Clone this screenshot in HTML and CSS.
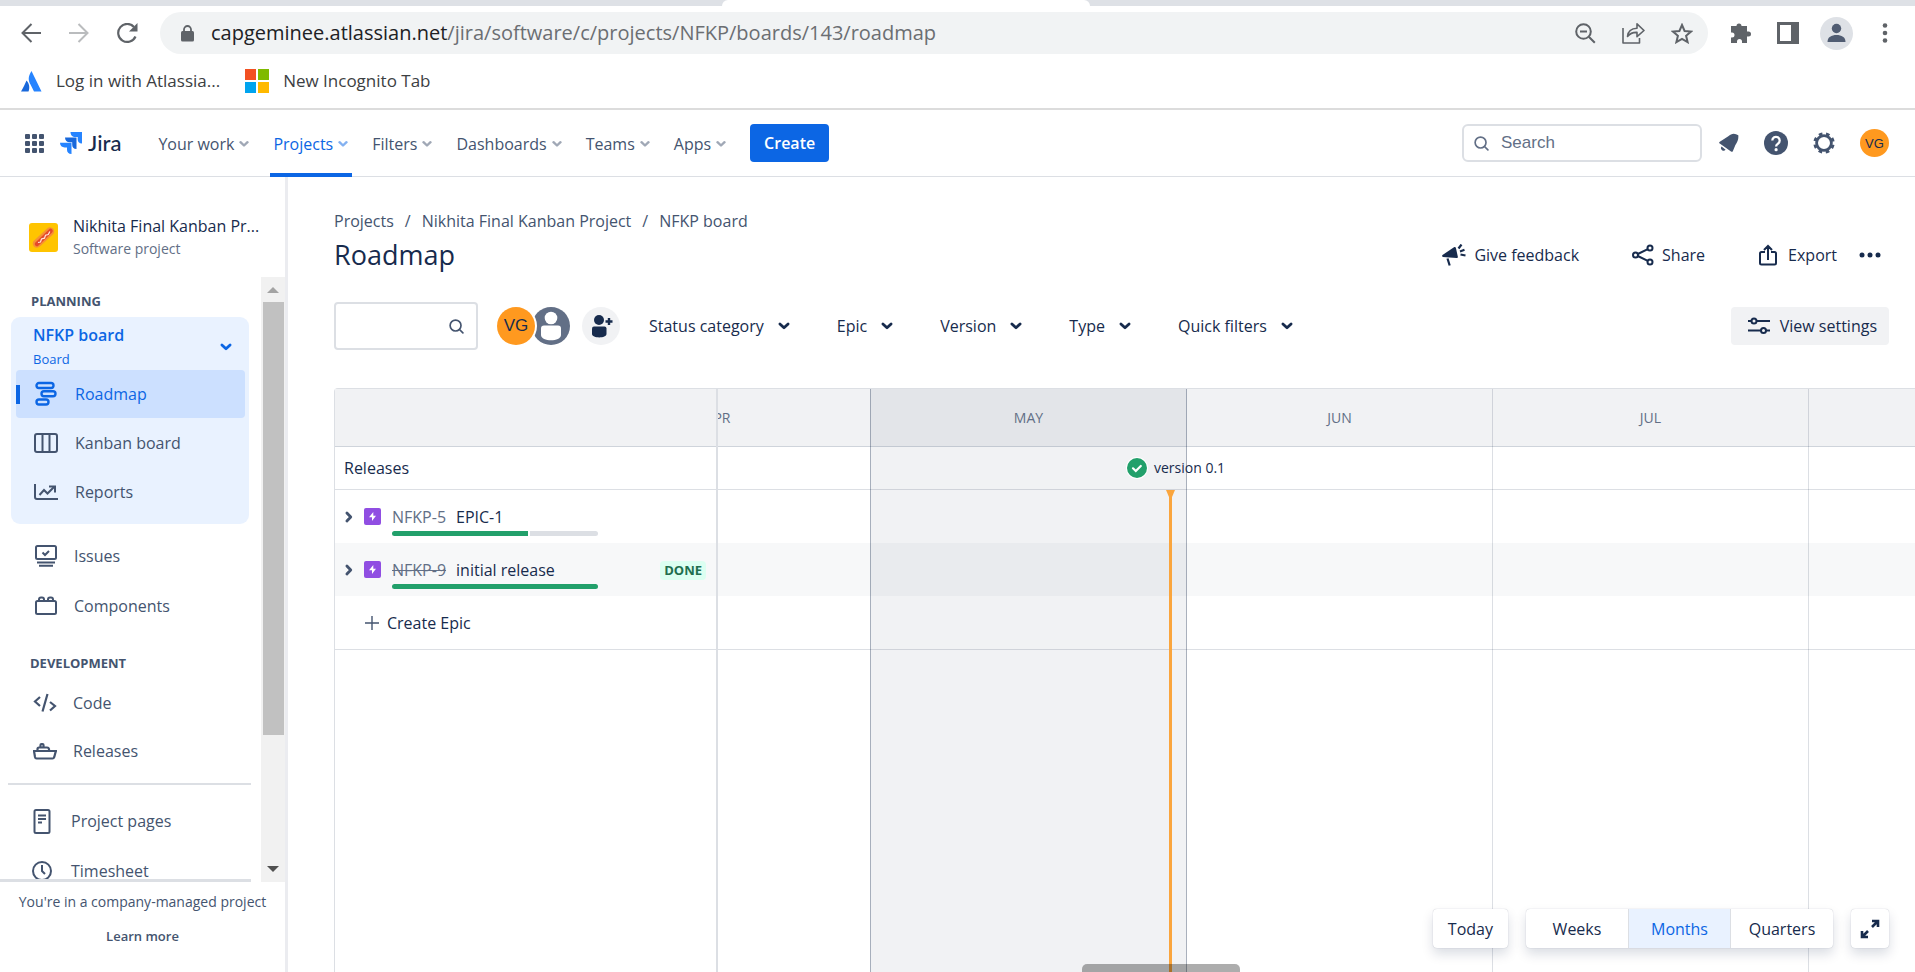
FILE: index.html
```html
<!DOCTYPE html>
<html lang="en">
<head>
<meta charset="utf-8">
<title>Roadmap - NFKP board - Jira</title>
<link rel="stylesheet" href="styles.css">
</head>
<body>
<svg class="defs" aria-hidden="true">
  <symbol id="chevron" viewBox="0 0 12 12"><path d="M2.500 4.200L6 7.500l3.500-3.300" fill="none" stroke="currentColor" stroke-width="2.400" stroke-linecap="round" stroke-linejoin="round"/></symbol>
  <symbol id="search" viewBox="0 0 16 16"><circle cx="7" cy="7" r="5.800" fill="none" stroke="currentColor" stroke-width="1.800"/><path d="M11.200 11.200l3.600 3.600" fill="none" stroke="currentColor" stroke-width="1.800" stroke-linecap="round"/></symbol>
  <symbol id="epic" viewBox="0 0 17 17"><rect width="17" height="17" rx="2" fill="#904ee2"/><path d="M9.300 4L5 9.300h3V13l4-5.300H9.300z" fill="#fff"/></symbol>
</svg>

<div class="tabstrip"><div class="tab"></div></div>
<div class="toolbar">
  <button class="tool" aria-label="Back"><svg width="20" height="20" viewBox="0 0 20 20"><path d="M20 10H2M10.500 1L1.500 10l9 9" fill="none" stroke="#5f6368" stroke-width="2"/></svg></button>
  <button class="tool" aria-label="Forward"><svg width="20" height="20" viewBox="0 0 20 20"><path d="M0 10h18M9.500 1l9 9-9 9" fill="none" stroke="#babcbe" stroke-width="2"/></svg></button>
  <button class="tool reload" aria-label="Reload"><svg width="21" height="21" viewBox="0 0 21 21"><path d="M18.500 13.500A9 9 0 1 1 17 4" fill="none" stroke="#5f6368" stroke-width="2.200"/><path d="M20.500 0v8.500H12z" fill="#5f6368"/></svg></button>
  <div class="omnibox">
    <svg width="13" height="17" viewBox="0 0 13 17"><rect y="6" width="13" height="10.500" rx="1.500" fill="#5f6368"/><path d="M3 7V4.500a3.500 3.500 0 0 1 7 0V7" fill="none" stroke="#5f6368" stroke-width="1.800"/></svg>
    <span class="url">capgeminee.atlassian.net<span class="path">/jira/software/c/projects/NFKP/boards/143/roadmap</span></span>
    <button aria-label="Zoom"><svg width="21" height="21" viewBox="0 0 21 21"><circle cx="8.500" cy="8.500" r="7.300" fill="none" stroke="#5f6368" stroke-width="2"/><path d="M5 8.500h7M13.800 13.800l6 6" stroke="#5f6368" stroke-width="2"/></svg></button>
    <button aria-label="Share page"><svg width="23" height="22" viewBox="0 0 23 22"><path d="M1 6v15h16.500v-5M5.500 14.500C6 9 9.500 6.500 15 6.300V1.800l7 6.700-7 6.200v-4.300c-4-.2-7 1-9.500 4.100z" fill="none" stroke="#5f6368" stroke-width="1.600" stroke-linejoin="round"/></svg></button>
    <button aria-label="Bookmark"><svg width="22" height="21" viewBox="0 0 22 21"><path d="M11 2l2.600 6 6.400.6-4.900 4.200 1.500 6.300L11 15.800l-5.600 3.300 1.500-6.300L2 8.600 8.400 8z" fill="none" stroke="#5f6368" stroke-width="2"/></svg></button>
  </div>
  <div class="extras">
    <button aria-label="Extensions"><svg width="22" height="22" viewBox="0 0 22 22"><path d="M1 4h5.500a2.500 2.500 0 1 1 5 0H17v5.500h1.500a2.500 2.500 0 1 1 0 5H17V21h-5v-1.500a2.500 2.500 0 0 0-5 0V21H1v-5.500h1a2.500 2.500 0 0 0 0-5H1z" fill="#5f6368"/></svg></button>
    <button aria-label="Side panel"><svg width="22" height="22" viewBox="0 0 22 22"><path d="M0 0h22v22H0zM3 3v16h11V3z" fill="#5f6368" fill-rule="evenodd"/></svg></button>
    <button aria-label="Profile"><svg width="33" height="33" viewBox="0 0 33 33"><circle cx="16.500" cy="16.500" r="16.500" fill="#dee1e6"/><circle cx="16.500" cy="11.500" r="4.700" fill="#505c72"/><path d="M7.500 25c0-5 4-7 9-7s9 2 9 7z" fill="#505c72"/></svg></button>
    <button aria-label="Menu"><svg width="6" height="20" viewBox="0 0 6 20"><g fill="#5f6368"><circle cx="3" cy="2.500" r="2.300"/><circle cx="3" cy="10" r="2.300"/><circle cx="3" cy="17.500" r="2.300"/></g></svg></button>
  </div>
</div>
<div class="bookmarks">
  <a href="#"><svg width="21" height="21" viewBox="0 0 21 21"><path d="M5.500 9.500C4.500 12 2 17 0 20.500h7.500C9 17 8.500 12.500 5.500 9.500z" fill="#1868db"/><path d="M10.500 0C6.500 6 7.500 10 9.500 13.500l3.500 7h7.500z" fill="#2684ff"/></svg>Log in with Atlassia...</a>
  <a href="#"><svg width="24" height="24" viewBox="0 0 24 24"><path d="M0 0h11v11H0z" fill="#f25022"/><path d="M13 0h11v11H13z" fill="#7fba00"/><path d="M0 13h11v11H0z" fill="#00a4ef"/><path d="M13 13h11v11H13z" fill="#ffb900"/></svg>New Incognito Tab</a>
</div>

<header class="header">
  <button class="switcher" aria-label="Switch to"><svg width="19" height="19" viewBox="0 0 19 19"><g fill="#44546f"><rect width="5" height="5" rx="1"/><rect x="7" width="5" height="5" rx="1"/><rect x="14" width="5" height="5" rx="1"/><rect y="7" width="5" height="5" rx="1"/><rect x="7" y="7" width="5" height="5" rx="1"/><rect x="14" y="7" width="5" height="5" rx="1"/><rect y="14" width="5" height="5" rx="1"/><rect x="7" y="14" width="5" height="5" rx="1"/><rect x="14" y="14" width="5" height="5" rx="1"/></g></svg></button>
  <a class="logo" href="#"><svg width="22" height="22" viewBox="0 0 22 22"><path d="M10.500 0H22v11.500c-3 0-4.300-2-4.300-4.300V5h-2.500c-2.700 0-4.700-2-4.700-5z" fill="#2684ff"/><path d="M5 5.500h11.500V17c-3 0-4.300-2-4.300-4.300v-2.400H9.700C7 10.300 5 8.500 5 5.500z" fill="#1868db"/><path d="M0 10.700h11.500V22c-3 0-4.500-2-4.500-4.300v-2.300H4.700C2 15.400 0 13.500 0 10.700z" fill="#2684ff"/></svg>Jira</a>
  <nav class="nav">
    <button>Your work<svg><use href="#chevron"/></svg></button>
    <button class="active">Projects<svg><use href="#chevron"/></svg></button>
    <button>Filters<svg><use href="#chevron"/></svg></button>
    <button>Dashboards<svg><use href="#chevron"/></svg></button>
    <button>Teams<svg><use href="#chevron"/></svg></button>
    <button>Apps<svg><use href="#chevron"/></svg></button>
  </nav>
  <button class="create">Create</button>
  <label class="search"><svg width="15" height="15"><use href="#search"/></svg><input type="text" placeholder="Search" aria-label="Search"></label>
  <div class="actions">
    <button aria-label="Notifications"><svg width="20" height="20" viewBox="0 0 20 20"><path d="M19.300 2.200c-3.500-2.400-7-1.900-10 1L.8 8.800c-.9.600-.9 1.200 0 1.700L12 18.400c.9.600 1.500.4 1.900-.5l2.500-6C18.500 9 19.700 6 19.300 2.200z" fill="#44546f"/><path d="M2.600 13.600l4 3.100a2.400 2.400 0 1 1-4-3.100z" fill="#44546f"/></svg></button>
    <button aria-label="Help"><svg width="24" height="24" viewBox="0 0 24 24"><circle cx="12" cy="12" r="12" fill="#44546f"/><path d="M8.300 9.500a3.700 3.700 0 1 1 5.600 3.200c-1.200.7-1.800 1.200-1.800 2.800" fill="none" stroke="#fff" stroke-width="2.300"/><circle cx="12.100" cy="18.700" r="1.600" fill="#fff"/></svg></button>
    <button aria-label="Settings"><svg width="22" height="22" viewBox="0 0 22 22"><circle cx="11" cy="11" r="7.400" fill="none" stroke="#44546f" stroke-width="2.800"/><circle cx="11" cy="11" r="9.300" fill="none" stroke="#44546f" stroke-width="2.800" stroke-dasharray="3.650 3.650" stroke-dashoffset="-1.800"/></svg></button>
    <button class="me" aria-label="Your profile">VG</button>
  </div>
</header>

<div class="app">
  <aside class="sidebar">
    <div class="project">
      <svg width="29" height="29" viewBox="0 0 29 29"><rect width="29" height="29" rx="3" fill="#ffc400"/><path d="M8 20.500L21 8.500" stroke="#f79232" stroke-width="8.500" stroke-linecap="round"/><path d="M8 21L21.500 8" stroke="#e5492b" stroke-width="4.500" stroke-linecap="round"/><path d="M9 19.500l2.500-.5 1-3 3-.8 1-3 2.800-.7 1.500-3" fill="none" stroke="#ffe9dc" stroke-width="1.200"/></svg>
      <div><strong>Nikhita Final Kanban Pr...</strong><small>Software project</small></div>
    </div>
    <div class="scroll">
      <nav class="menu">
        <h2>PLANNING</h2>
        <div class="group">
          <button class="board"><span><b>NFKP board</b><small>Board</small></span><svg><use href="#chevron"/></svg></button>
          <a class="item current" href="#"><svg width="24" height="26" viewBox="0 0 24 26" fill="none" stroke="#0c66e4" stroke-width="2.400"><rect x="2.500" y="2" width="17" height="5" rx="2.500"/><rect x="7.500" y="10.200" width="14" height="5" rx="2.500"/><rect x="2.500" y="18.500" width="12" height="5" rx="2.500"/></svg>Roadmap</a>
          <a class="item" href="#"><svg width="24" height="20" viewBox="0 0 24 20" fill="none" stroke="#44546f" stroke-width="2"><rect x="1" y="1" width="22" height="18" rx="2"/><path d="M8.500 1v18M15.500 1v18"/></svg>Kanban board</a>
          <a class="item" href="#"><svg width="24" height="18" viewBox="0 0 24 18" fill="none" stroke="#44546f" stroke-width="2"><path d="M1 1v13a2 2 0 0 0 2 2h21M5.500 12l4.500-5 3.500 3.500L20 4"/><path d="M15 3.500h6v6" stroke-width="2"/></svg>Reports</a>
        </div>
        <a class="item plain" href="#"><svg width="24" height="22" viewBox="0 0 24 22" fill="none" stroke="#44546f" stroke-width="2"><rect x="2" y="1" width="20" height="13" rx="1.500"/><path d="M3 17.500h18M5 20.800h14M8.500 7.500l2.500 2.500 4-4"/></svg>Issues</a>
        <a class="item plain" href="#"><svg width="24" height="20" viewBox="0 0 24 20" fill="none" stroke="#44546f" stroke-width="2"><rect x="2" y="5" width="20" height="13" rx="1.500"/><path d="M5 5V3.500a2 2 0 0 1 2-2h1a2 2 0 0 1 2 2V5M14 5V3.500a2 2 0 0 1 2-2h1a2 2 0 0 1 2 2V5"/></svg>Components</a>
        <h2 class="dev">DEVELOPMENT</h2>
        <a class="item dev" href="#"><svg width="24" height="20" viewBox="0 0 24 20" fill="none" stroke="#44546f" stroke-width="2.200"><path d="M7 4L2 8.500 7 13M14.500 1l-5 17.500M17 9l5 4-5 4.500"/></svg>Code</a>
        <a class="item dev" href="#"><svg width="24" height="18" viewBox="0 0 24 18" fill="none" stroke="#44546f" stroke-width="2.200"><path d="M1 9h22c-1 2.500-1 4-2 6.500-.2.800-.6 1-1.500 1H3.500c-1 0-1.300-.5-1.500-1.500zM4.500 9V7a1.500 1.500 0 0 1 1.500-1.500h8A2 2 0 0 1 16 7v2M7.500 5.500V3a1 1 0 0 1 1-1h1a1 1 0 0 1 1 1v2.500"/></svg>Releases</a>
        <hr>
        <a class="item pages" href="#"><svg width="20" height="25" viewBox="0 0 20 25" fill="none" stroke="#44546f" stroke-width="2"><rect x="2.500" y="1" width="15" height="23" rx="1.500"/><path d="M6 6.500h8M6 10h8M6 13.500h4"/></svg>Project pages</a>
        <a class="item pages" href="#"><svg width="20" height="20" viewBox="0 0 20 20" fill="none" stroke="#44546f" stroke-width="2"><circle cx="10" cy="10" r="9"/><path d="M10 4v6l3 3"/></svg>Timesheet</a>
      </nav>
      <div class="scrollbar"><svg width="12" height="6"><path d="M6 0l6 6H0z" fill="#a3a3a3"/></svg><div class="thumb"></div><svg width="12" height="6"><path d="M0 0h12L6 6z" fill="#505050"/></svg></div>
    </div>
    <footer class="note"><p>You're in a company-managed project</p><a href="#">Learn more</a></footer>
  </aside>

  <main class="main">
    <nav class="crumbs"><a href="#">Projects</a><span>/</span><a href="#">Nikhita Final Kanban Project</a><span>/</span><a href="#">NFKP board</a></nav>
    <div class="titlebar">
      <h1>Roadmap</h1>
      <button class="feedback"><svg width="24" height="22" viewBox="0 0 24 22"><path d="M.5 11L12 3.200c1-.5 1.600-.2 1.900.8l1.900 8.500c.2 1-.2 1.500-1.200 1.500L1 13c-1-.4-1.200-1.200-.5-2z" fill="#172b4d"/><path d="M5.500 14.500l2.200 7M16.500 4.500l3-4M18 7.500l4.500-1.700M18.500 10.500l5 1" stroke="#172b4d" stroke-width="2.200" fill="none"/></svg>Give feedback</button>
      <button class="share"><svg width="22" height="22" viewBox="0 0 22 22" fill="none" stroke="#172b4d" stroke-width="2"><circle cx="3.500" cy="11" r="2.500"/><circle cx="18" cy="4" r="2.500"/><circle cx="18" cy="18" r="2.500"/><path d="M5.800 10l10-4.800M5.800 12l10 4.800"/></svg>Share</button>
      <button class="export"><svg width="18" height="22" viewBox="0 0 18 22" fill="none" stroke="#172b4d" stroke-width="2"><path d="M6 8H2.500C1.500 8 1 8.500 1 9.500V19c0 1 .5 1.500 1.500 1.500h13c1 0 1.500-.5 1.500-1.500V9.500C17 8.500 16.500 8 15.500 8H12M9 16V2M5 6l4-4 4 4"/></svg>Export</button>
      <button class="more" aria-label="More"><svg width="22" height="6" viewBox="0 0 22 6" fill="#172b4d"><circle cx="3" cy="3" r="2.500"/><circle cx="11" cy="3" r="2.500"/><circle cx="19" cy="3" r="2.500"/></svg></button>
    </div>
    <div class="filters">
      <label class="find"><input type="text" aria-label="Search roadmap"><svg width="15" height="15"><use href="#search"/></svg></label>
      <div class="people">
        <button class="vg">VG</button>
        <button class="nobody" aria-label="Unassigned"><svg width="38" height="38" viewBox="0 0 38 38"><circle cx="19" cy="19" r="19" fill="#626f86"/><circle cx="19" cy="11" r="6.300" fill="#fff"/><path d="M9 21.500a3 3 0 0 1 3-3h14a3 3 0 0 1 3 3V28c0 7-20 7-20 0z" fill="#fff"/></svg></button>
        <button class="add" aria-label="Add people"><svg width="38" height="38" viewBox="0 0 38 38"><circle cx="19" cy="19" r="19" fill="#f1f2f4"/><circle cx="17" cy="13" r="5" fill="#172b4d"/><path d="M10 21.500a2 2 0 0 1 2-2h10.500a2 2 0 0 1 2 2V27c0 4.500-14.500 4.500-14.500 0z" fill="#172b4d"/><path d="M27 11v7M23.500 14.500h7" stroke="#172b4d" stroke-width="2.400"/></svg></button>
      </div>
      <button class="filter status">Status category<svg><use href="#chevron"/></svg></button>
      <button class="filter">Epic<svg><use href="#chevron"/></svg></button>
      <button class="filter">Version<svg><use href="#chevron"/></svg></button>
      <button class="filter">Type<svg><use href="#chevron"/></svg></button>
      <button class="filter">Quick filters<svg><use href="#chevron"/></svg></button>
      <button class="settings"><svg width="22" height="18" viewBox="0 0 22 18" fill="none" stroke="#172b4d" stroke-width="2"><path d="M0 4h3.500M8.500 4H22M0 13.500h13M18 13.500h4"/><circle cx="6" cy="4" r="2.500"/><circle cx="15.500" cy="13.500" r="2.500"/></svg>View settings</button>
    </div>

    <section class="chart">
      <div class="epics">
        <div class="head"></div>
        <div class="releases">Releases</div>
        <div class="epic">
          <button class="expand" aria-label="Expand"><svg><use href="#chevron"/></svg></button>
          <svg width="17" height="17"><use href="#epic"/></svg>
          <div class="summary"><div><a class="key" href="#">NFKP-5</a><span>EPIC-1</span></div><div class="progress"><i class="done" style="width:66%"></i><i class="todo"></i></div></div>
        </div>
        <div class="epic alt">
          <button class="expand" aria-label="Expand"><svg><use href="#chevron"/></svg></button>
          <svg width="17" height="17"><use href="#epic"/></svg>
          <div class="summary"><div><a class="key closed" href="#">NFKP-9</a><span>initial release</span></div><div class="progress"><i class="done" style="width:100%"></i></div></div>
          <span class="badge">DONE</span>
        </div>
        <button class="create-epic"><svg width="14" height="14" viewBox="0 0 14 14"><path d="M7 0v14M0 7h14" stroke="#44546f" stroke-width="1.400"/></svg>Create Epic</button>
      </div>
      <div class="timeline">
        <div class="rows"><div class="head"></div><div class="releases"></div><div class="epic"></div><div class="epic alt"></div><div class="create-epic"></div></div>
        <div class="months">
          <div class="month m30">APR</div><div class="month m31 now">MAY</div><div class="month m30">JUN</div><div class="month m31">JUL</div><div class="month m31"></div>
        </div>
        <div class="today"><svg width="9" height="7"><path d="M0 0h9L6 7H3z" fill="#faa53d"/></svg></div>
        <div class="version"><svg width="22" height="22" viewBox="0 0 22 22"><circle cx="11" cy="11" r="11" fill="#fff"/><circle cx="11" cy="11" r="10" fill="#22a06b"/><path d="M7 11.300l2.800 2.700 5-5" fill="none" stroke="#fff" stroke-width="2.200" stroke-linecap="round"/></svg>version 0.1</div>
        <div class="hthumb"></div>
        <div class="scale">
          <button class="card">Today</button>
          <div class="card modes"><button>Weeks</button><button class="on">Months</button><button>Quarters</button></div>
          <button class="card full" aria-label="Full screen"><svg width="20" height="20" viewBox="0 0 20 20"><path d="M12 2h6v6M18 2l-6 6M2 12v6h6M2 18l6-6" fill="none" stroke="#172b4d" stroke-width="2.600"/></svg></button>
        </div>
      </div>
    </section>
  </main>
</div>
</body>
</html>
```
FILE: styles.css
```css
* { box-sizing: border-box; }
body {
  margin: 0;
  height: 100vh;
  display: flex;
  flex-direction: column;
  overflow: hidden;
  background: #fff;
  color: #172b4d;
  font: 16px/24px "Open Sans", "Noto Sans", sans-serif;
}
button {
  font: inherit;
  color: inherit;
  background: none;
  border: 0;
  padding: 0;
  display: flex;
  align-items: center;
  white-space: nowrap;
  flex: none;
}
a { color: inherit; text-decoration: none; }
svg { display: block; flex: none; }
.defs { position: absolute; width: 0; height: 0; }

/* Browser chrome */
.tabstrip { height: 6px; background: #dee1e6; flex: none; }
.tab { width: 368px; height: 6px; margin-left: 722px; background: #fff; border-radius: 6px 6px 0 0; }
.toolbar { display: flex; align-items: center; height: 54px; flex: none; padding: 0 16px 0 21px; }
.tool { margin-right: 28px; }
.reload { margin-right: 22px; }
.omnibox { flex: 1; height: 42px; display: flex; align-items: center; gap: 26px; padding: 0 15px 0 21px; background: #f1f3f4; border-radius: 21px; }
.url { flex: 1; margin-left: -9px; font-size: 20px; color: #202124; white-space: nowrap; }
.path { color: #6b6e72; }
.extras { display: flex; align-items: center; gap: 25px; margin-left: 22px; padding-right: 11px; }
.extras button:nth-child(3) { margin: 0 4px 0 -4px; }
.bookmarks { display: flex; align-items: center; gap: 25px; height: 50px; padding: 0 21px 6px; border-bottom: 2px solid #dcdcdc; flex: none; color: #3c4043; font-size: 17px; }
.bookmarks a { display: flex; align-items: center; gap: 14px; }

/* Jira header */
.header { display: flex; align-items: center; height: 67px; flex: none; padding: 0 26px 0 25px; border-bottom: 1px solid #dcdfe4; }
.logo { display: flex; align-items: center; gap: 6px; margin: 0 34px 0 16px; font: 500 22px/24px Lato, sans-serif; }
.nav { display: flex; gap: 17px; align-self: stretch; margin-bottom: -1px; }
.nav button { gap: 4px; padding: 5px 3px 0; border-bottom: 4px solid transparent; color: #44546f; font-weight: 500; }
.nav svg { width: 12px; height: 12px; opacity: .5; }
.nav .active { color: #0c66e4; border-color: #0c66e4; }
.create { height: 38px; padding: 0 14px; margin-left: 20px; border-radius: 4px; background: #0c66e4; color: #fff; font-weight: 600; }
.search { display: flex; align-items: center; gap: 12px; width: 240px; height: 38px; margin-left: auto; padding: 0 10px; border: 2px solid #dcdfe4; border-radius: 6px; color: #626f86; }
.search input, .find input { flex: 1; min-width: 0; border: 0; outline: 0; padding: 0; background: none; font: 17px "Liberation Sans", sans-serif; }
.search input::placeholder { color: #626f86; }
.actions { display: flex; align-items: center; gap: 25px; margin-left: 17px; }
.me { width: 29px; height: 28px; justify-content: center; border-radius: 50%; background: #ff991f; color: #172b4d; font: 13px "Liberation Sans", sans-serif; }

.app { flex: 1; display: flex; min-height: 0; }

/* Sidebar */
.sidebar { width: 288px; flex: none; display: flex; flex-direction: column; border-right: 3px solid #ebecf0; }
.project { display: flex; align-items: center; gap: 15px; height: 100px; padding: 20px 16px 0 29px; flex: none; }
.project strong, .project small { display: block; white-space: nowrap; }
.project strong { font-weight: 500; }
small { font-size: 13px; }
.project small { font-size: 14px; line-height: 22px; color: #626f86; }
.scroll { flex: 1; min-height: 0; display: flex; justify-content: space-between; }
.menu { width: 251px; padding: 12px 0 0 8px; overflow: hidden; border-bottom: 3px solid #dcdfe4; }
.menu h2 { margin: 0 0 4px 23px; font-size: 13px; line-height: 24px; font-weight: 700; color: #44546f; }
.menu h2.dev { margin: 20px 0 4px 22px; }
.group { width: 238px; height: 207px; margin: 0 0 7px 3px; padding: 0 4px 0 5px; border-radius: 9px; background: #e9f2ff; }
.board { width: 100%; height: 53px; justify-content: space-between; text-align: left; color: #0c66e4; padding: 6px 12px 0 17px; }
.board b, .board small { display: block; }
.board b { font-weight: 600; }
.board svg { width: 14px; height: 14px; }
.item { display: flex; align-items: center; gap: 17px; height: 49px; padding-left: 18px; color: #44546f; border-radius: 4px; white-space: nowrap; }
.item.current { height: 48px; color: #0c66e4; background: #cce0ff linear-gradient(#0c66e4, #0c66e4) left center / 4px 19px no-repeat; }
.item.plain { height: 50px; padding-left: 26px; gap: 16px; }
.item.dev { height: 48px; padding-left: 25px; gap: 16px; }
.item.pages { height: 50px; padding-left: 24px; gap: 19px; }
.menu hr { height: 2px; margin: 8px 0 11px; border: 0; background: #dcdfe4; }
.scrollbar { width: 24px; display: flex; flex-direction: column; align-items: center; padding: 10px 0; background: #f1f1f1; }
.thumb { width: 21px; flex: none; height: 433px; margin: 9px 0 auto; background: #c1c1c1; }
.note { height: 90px; flex: none; text-align: center; color: #44546f; font-size: 13px; }
.note p { margin: 8px 0 10px; font-size: 14px; }
.note a { font-weight: 600; }

/* Main */
.main { flex: 1; min-width: 0; display: flex; flex-direction: column; padding: 32px 0 0 46px; }
.crumbs { display: flex; gap: 11px; color: #44546f; }
.titlebar { display: flex; align-items: center; height: 44px; padding-right: 34px; font-weight: 500; }
h1 { margin: 0 auto 0 0; font-size: 27px; line-height: 36px; font-weight: 500; }
.titlebar button { gap: 8px; }
.titlebar .share { margin-left: 53px; }
.titlebar .export { margin-left: 54px; gap: 11px; }
.titlebar .more { margin-left: 22px; }
.filters { display: flex; align-items: center; height: 48px; margin-top: 25px; padding-right: 26px; font-weight: 500; }
.find { display: flex; align-items: center; width: 144px; height: 48px; padding: 0 12px; border: 2px solid #dcdfe4; border-radius: 4px; color: #44546f; }
.people { display: flex; margin-left: 19px; }
.vg { width: 38px; height: 38px; justify-content: center; border-radius: 50%; background: #ff991f; box-shadow: 0 0 0 2px #fff; font: 17px "Liberation Sans", sans-serif; z-index: 1; }
.nobody { margin-left: -3px; }
.add { margin-left: 12px; }
.filter { gap: 13px; margin-right: 46px; }
.filter svg { width: 14px; height: 14px; }
.status { margin-left: 29px; }
.settings { height: 38px; margin-left: auto; padding: 0 12px 0 17px; gap: 10px; border-radius: 4px; background: #f1f2f4; }

/* Roadmap chart */
.chart { flex: 1; min-height: 0; display: flex; margin-top: 38px; border: 1px solid #dcdfe4; border-width: 1px 0 0 1px; border-radius: 4px 0 0 0; }
.epics { width: 383px; flex: none; border-right: 2px solid #dcdfe4; }
.head { height: 58px; border-bottom: 1px solid #cfd4db; background: #f1f2f4; }
.releases { height: 43px; padding: 9px; border-bottom: 1px solid #dcdfe4; font-weight: 500; }
.epic { display: flex; align-items: flex-start; height: 53px; padding: 18px 9px 0; }
.epic.alt { background: #f7f8f9; }
.expand { width: 20px; height: 17px; color: #44546f; }
.expand svg { width: 14px; height: 14px; transform: rotate(-90deg); margin-left: -2px; }
.summary { margin: -3px auto 0 11px; width: 206px; }
.key { color: #626f86; margin-right: 10px; }
.closed { text-decoration: line-through; }
.progress { display: flex; gap: 2px; height: 5px; margin-top: 2px; border-radius: 3px; overflow: hidden; }
.done { background: #22a06b; }
.todo { flex: 1; background: #dcdfe4; }
.badge { padding: 0 4px; margin-right: 1px; border-radius: 4px; background: #dcfff1; color: #216e4e; font-size: 13px; line-height: 19px; font-weight: 700; }
.create-epic { width: 100%; height: 54px; padding-left: 30px; gap: 8px; border-bottom: 1px solid #dcdfe4; font-weight: 500; }
.timeline { flex: 1; min-width: 0; position: relative; overflow: hidden; }
.months { position: absolute; inset: 0; display: flex; margin-left: -153px; }
.month { flex: none; height: 100%; padding-top: 17px; border-right: 1px solid rgba(9, 30, 66, .14); text-align: center; font-size: 14px; color: #626f86; }
.m30 { width: 306px; }
.m31 { width: 316px; }
.month.now { background: rgba(9, 30, 66, .06); border-color: rgba(9, 30, 66, .31); box-shadow: -1px 0 rgba(9, 30, 66, .25); }
.today { position: absolute; left: 451px; top: 101px; bottom: 0; width: 3px; background: #faa53d; }
.today svg { margin-left: -3px; }
.version { position: absolute; left: 408px; top: 67px; display: flex; align-items: center; gap: 6px; font-size: 14px; font-weight: 500; }
.hthumb { position: absolute; left: 364px; bottom: 0; width: 158px; height: 8px; border-radius: 5px 5px 0 0; background: rgba(0, 0, 0, .32); }
.scale { position: absolute; right: 26px; bottom: 24px; display: flex; gap: 18px; font-weight: 500; }
.card { height: 39px; padding: 0 15px; border-radius: 4px; background: #fff; box-shadow: 0 0 1px rgba(9, 30, 66, .31), 0 6px 12px rgba(9, 30, 66, .15); }
.modes { display: flex; padding: 0; }
.modes button { width: 102px; height: 39px; justify-content: center; }
.modes .on { background: #e9f2ff; color: #0c66e4; border: 1px solid #dcdfe4; border-width: 0 1px; width: 103px; }
.full { padding: 0 9px; }
```
